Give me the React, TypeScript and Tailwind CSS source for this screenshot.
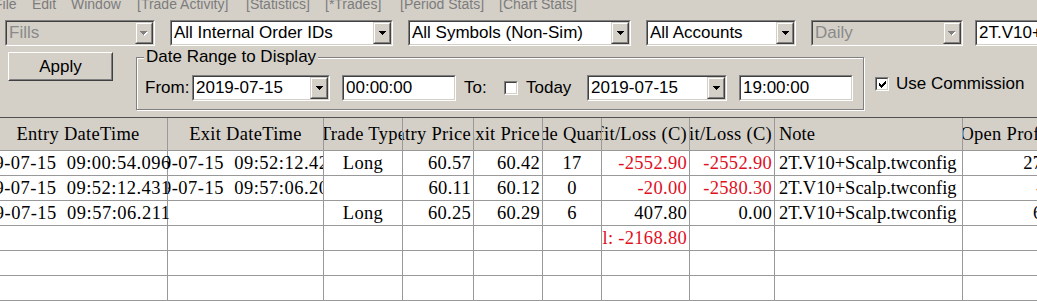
import React from "react";

const menu: [string, string][] = [
  ["File", "w-[38px]"],
  ["Edit", "w-[39px]"],
  ["Window", "w-[66px]"],
  ["[Trade Activity]", "w-[109px]"],
  ["[Statistics]", "w-[79px]"],
  ["[*Trades]", "w-[75px]"],
  ["[Period Stats]", "w-[99px]"],
  ["[Chart Stats]", "w-[100px]"],
];

type Align = "c" | "r" | "l" | "d";

interface Col {
  title: string;
  w: string;
  align: Align;
}

const cols: Col[] = [
  { title: "Entry DateTime", w: "w-[179px]", align: "d" },
  { title: "Exit DateTime", w: "w-[156px]", align: "d" },
  { title: "Trade Type", w: "w-[79px]", align: "c" },
  { title: "Entry Price", w: "w-[71px]", align: "r" },
  { title: "Exit Price", w: "w-[69px]", align: "r" },
  { title: "Trade Quantity", w: "w-[59px]", align: "c" },
  { title: "Profit/Loss (C)", w: "w-[88px]", align: "r" },
  { title: "Cum. Profit/Loss (C)", w: "w-[85px]", align: "r" },
  { title: "Note", w: "w-[188px]", align: "l" },
  { title: "Open Profit (C)", w: "w-[116px]", align: "r" },
];

// value, red?
type Cell = [string, boolean?];

const note = "2T.V10+Scalp.twconfig";

const rows: Cell[][] = [
  [["2019-07-15  09:00:54.096"], ["2019-07-15  09:52:12.429"], ["Long"], ["60.57"], ["60.42"], ["17"], ["-2552.90", true], ["-2552.90", true], [note], ["272.50"]],
  [["2019-07-15  09:52:12.431"], ["2019-07-15  09:57:06.205"], [""], ["60.11"], ["60.12"], ["0"], ["-20.00", true], ["-2580.30", true], [note], ["-8.10", true]],
  [["2019-07-15  09:57:06.211"], [""], ["Long"], ["60.25"], ["60.29"], ["6"], ["407.80"], ["0.00"], [note], ["67.80"]],
  [[""], [""], [""], [""], [""], [""], ["Total: -2168.80", true], [""], [""], [""]],
  [[""], [""], [""], [""], [""], [""], [""], [""], [""], [""]],
  [[""], [""], [""], [""], [""], [""], [""], [""], [""], [""]],
];

const headCls: Record<Align, string> = {
  c: "justify-center tracking-[0.3px]",
  d: "justify-center tracking-[0.3px]",
  r: "justify-end pr-[2px] tracking-[0.3px]",
  l: "justify-start pl-[4px]",
};

const cellCls: Record<Align, string> = {
  c: "justify-center tracking-[0.3px]",
  d: "justify-center pr-[20px] tracking-[0.5px]",
  r: "justify-end pr-[2px] tracking-[0.3px]",
  l: "justify-start pl-[4px]",
};

function Sunken({ className = "", children }: { className?: string; children?: React.ReactNode }) {
  return (
    <div className={`shrink-0 border border-t-[#808080] border-l-[#808080] border-b-white border-r-white ${className}`}>
      <div className="h-full flex border border-t-[#404040] border-l-[#404040] border-b-[#d4d0c8] border-r-[#d4d0c8]">
        {children}
      </div>
    </div>
  );
}

function Arrow({ disabled }: { disabled?: boolean }) {
  if (disabled) {
    return (
      <svg width="8" height="5" viewBox="0 0 8 5" shapeRendering="crispEdges">
        <path d="M1 1h7v1H1zM2 2h5v1H2zM3 3h3v1H3zM4 4h1v1H4z" fill="#ffffff" />
        <path d="M0 0h7v1H0zM1 1h5v1H1zM2 2h3v1H2zM3 3h1v1H3z" fill="#808080" />
      </svg>
    );
  }
  return (
    <svg width="7" height="4" viewBox="0 0 7 4" shapeRendering="crispEdges">
      <path d="M0 0h7v1H0zM1 1h5v1H1zM2 2h3v1H2zM3 3h1v1H3z" fill="#000000" />
    </svg>
  );
}

function Combo({ className, text, disabled }: { className: string; text: string; disabled?: boolean }) {
  return (
    <Sunken className={`h-[26px] ${className}`}>
      <div
        className={`flex-1 flex items-center pl-[2px] overflow-hidden whitespace-nowrap ${
          disabled ? "bg-[#d4d0c8] text-[#8a8a8a]" : "bg-white text-black"
        }`}
      >
        {text}
      </div>
      <div className="w-[18px] h-full border border-t-[#d4d0c8] border-l-[#d4d0c8] border-b-[#404040] border-r-[#404040]">
        <div className="h-full flex items-center justify-center bg-[#d4d0c8] border border-t-white border-l-white border-b-[#808080] border-r-[#808080]">
          <Arrow disabled={disabled} />
        </div>
      </div>
    </Sunken>
  );
}

function CheckBox({ checked }: { checked?: boolean }) {
  return (
    <Sunken className="w-[14px] h-[14px]">
      <div className="flex-1 bg-white flex items-center justify-center">
        {checked && (
          <svg width="7" height="7" viewBox="0 0 7 7" shapeRendering="crispEdges">
            <path d="M6 0h1v3H6zM5 1h1v3H5zM4 2h1v3H4zM3 3h1v3H3zM2 4h1v3H2zM1 3h1v3H1zM0 2h1v3H0z" fill="#000" />
          </svg>
        )}
      </div>
    </Sunken>
  );
}

export default function App() {
  return (
    <div className="w-[1037px] h-[301px] overflow-hidden bg-[#d4d0c8] font-['Liberation_Sans',Arial,sans-serif] text-[17px] leading-[20px] text-black">
      {/* menu strip, scrolled partly off the top */}
      <div className="h-[20px] overflow-hidden">
        <div className="flex -ml-[6px] -mt-[4px] text-[14px] leading-[16px] text-[#7c7c7c] whitespace-nowrap">
          {menu.map(([m, w]) => (
            <span key={m} className={`${w} shrink-0`}>
              {m}
            </span>
          ))}
        </div>
      </div>

      {/* filter combos */}
      <div className="flex gap-[15px] pl-[5px] h-[26px]">
        <Combo className="w-[150px]" text="Fills" disabled />
        <Combo className="w-[223px]" text="All Internal Order IDs" />
        <Combo className="w-[223px]" text="All Symbols (Non-Sim)" />
        <Combo className="w-[150px]" text="All Accounts" />
        <Combo className="w-[152px]" text="Daily" disabled />
        <Sunken className="h-[26px] w-[120px] -ml-[3px]">
          <div className="flex-1 bg-white flex items-center pl-[2px] overflow-hidden whitespace-nowrap">2T.V10+Scalp.twconfig</div>
        </Sunken>
      </div>

      {/* apply + date range */}
      <div className="flex items-start h-[71px]">
        <button className="ml-[8px] mt-[6px] w-[105px] h-[29px] border border-t-white border-l-white border-b-[#404040] border-r-[#404040]">
          <div className="h-full flex items-center justify-center border border-t-[#d4d0c8] border-l-[#d4d0c8] border-b-[#808080] border-r-[#808080]">
            Apply
          </div>
        </button>

        <fieldset className="ml-[23px] mt-[1px] w-[728px] border border-[#808080] shadow-[inset_1px_1px_0_#ffffff,1px_1px_0_#ffffff] pl-[8px] pr-0 pt-[8px] pb-[8px]">
          <legend className="-ml-[1px] px-[2px] bg-[#d4d0c8] leading-[20px]">Date Range to Display</legend>
          <div className="flex items-center h-[26px] whitespace-nowrap">
            <span className="w-[47px]">From:</span>
            <Combo className="w-[138px]" text="2019-07-15" />
            <Sunken className="ml-[12px] h-[26px] w-[114px]">
              <div className="flex-1 bg-white flex items-center pl-[2px]">00:00:00</div>
            </Sunken>
            <span className="ml-[8px] w-[40px]">To:</span>
            <CheckBox />
            <span className="ml-[8px] w-[61px]">Today</span>
            <Combo className="w-[140px]" text="2019-07-15" />
            <Sunken className="ml-[12px] h-[26px] w-[114px]">
              <div className="flex-1 bg-white flex items-center pl-[2px]">19:00:00</div>
            </Sunken>
          </div>
        </fieldset>

        <div className="ml-[11px] mt-[28px] h-[20px] flex items-center gap-[7px] whitespace-nowrap">
          <CheckBox checked />
          <span>Use Commission</span>
        </div>
      </div>

      {/* trades grid */}
      <div className="-ml-[11px] w-[1090px] font-['Liberation_Serif','Times_New_Roman',serif] text-[18.5px] leading-[22px]">
        <div className="flex h-[34px] bg-[#d4d0c8] border-t border-t-[#505050] border-b border-b-[#999999]">
          {cols.map((c, j) => (
            <div
              key={c.title}
              className={`${c.w} shrink-0 h-full flex items-center overflow-hidden whitespace-nowrap border-r border-r-[#999999] ${headCls[c.align]}`}
            >
              <span className={`shrink-0 ${j === 9 ? "-mr-[5px]" : ""}`}>{c.title}</span>
            </div>
          ))}
        </div>
        {rows.map((r, i) => (
          <div key={i} className="flex h-[25px] bg-white border-b border-b-[#999999]">
            {r.map(([v, red], j) => (
              <div
                key={j}
                className={`${cols[j].w} shrink-0 h-full flex items-center whitespace-pre border-r border-r-[#999999] ${
                  j === 0 ? "overflow-visible" : "overflow-hidden"
                } ${cellCls[cols[j].align]} ${red ? "text-[#e0101e]" : "text-black"}`}
              >
                <span className="shrink-0">{v}</span>
              </div>
            ))}
          </div>
        ))}
      </div>
    </div>
  );
}
